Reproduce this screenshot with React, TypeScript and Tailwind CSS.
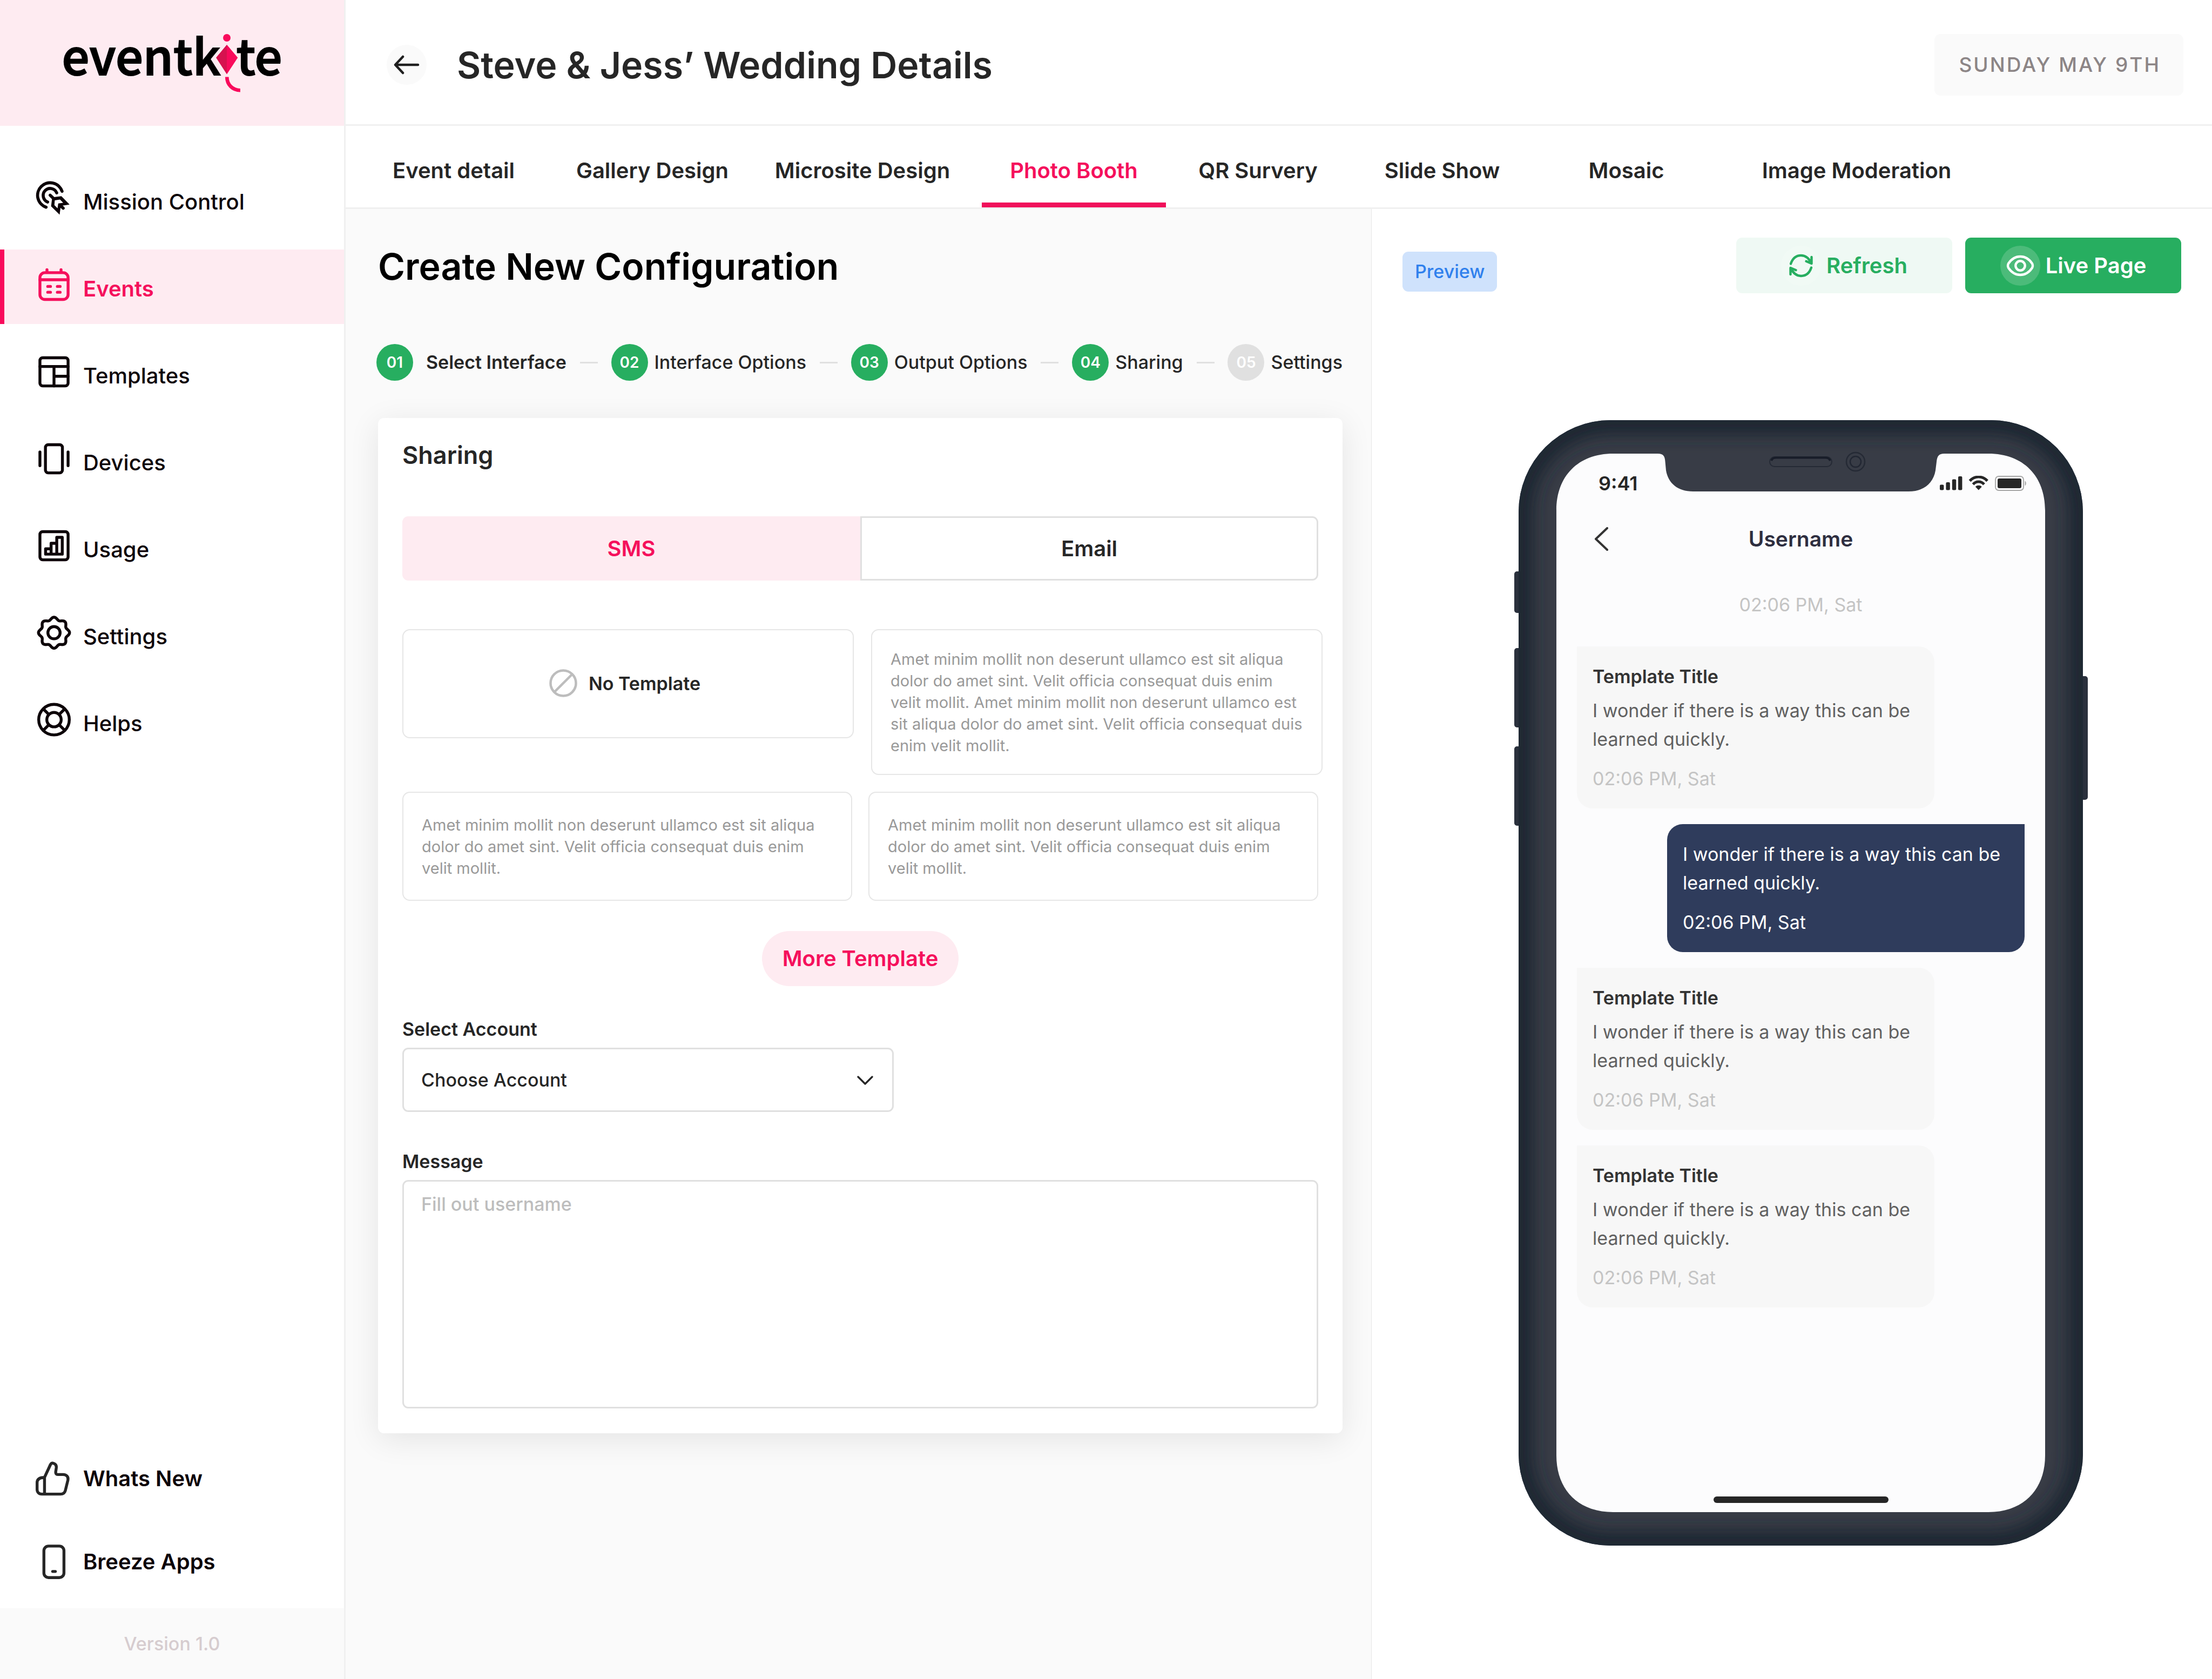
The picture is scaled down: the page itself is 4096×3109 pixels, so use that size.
import React from "react";

type IconProps = { className?: string };

const stroke = {
  fill: "none",
  stroke: "currentColor",
  strokeWidth: 1.9,
  strokeLinecap: "round" as const,
  strokeLinejoin: "round" as const,
};

function MissionIcon({ className }: IconProps) {
  return (
    <svg viewBox="96 78 288 288" className={className} aria-hidden="true">
      <g fill="none" stroke="currentColor" strokeWidth="24" strokeLinecap="round">
        <path d="M303 172A98.5 98.5 0 1 0 178 297" />
        <path d="M261 184A55 55 0 1 0 190 256" />
        <path d="M210 203L240 232M290 283L312 305" />
      </g>
      <path
        fill="currentColor"
        fillRule="evenodd"
        d="M240 218L298 210L362 276L293 287L284 355L217 290L224 236ZM246 243L287 237L312 262L273 267L268 306L243 280Z"
      />
    </svg>
  );
}

function EventsIcon({ className }: IconProps) {
  return (
    <svg viewBox="0 0 24 24" className={className} aria-hidden="true" {...stroke}>
      <rect x="2.8" y="4.2" width="18.4" height="17.5" rx="3.2" />
      <path d="M2.8 8.8H21.2M7.4 2.3V4M16.6 2.3V4M7.9 13.2H9.7M14.2 13.2H16M7.9 17H9.7M14.2 17H16" />
    </svg>
  );
}

function TemplatesIcon({ className }: IconProps) {
  return (
    <svg viewBox="0 0 24 24" className={className} aria-hidden="true" {...stroke}>
      <rect x="2.8" y="3" width="18.4" height="18.4" rx="1.8" />
      <path d="M2.8 8.7H21.2M12 8.7V21.4M12 15.1H21.2" />
    </svg>
  );
}

function DevicesIcon({ className }: IconProps) {
  return (
    <svg viewBox="0 0 24 24" className={className} aria-hidden="true" {...stroke}>
      <rect x="6.4" y="3" width="11.1" height="18.4" rx="1.8" />
      <path d="M2.8 7.7V16.7M21.2 7.7V16.7" />
    </svg>
  );
}

function UsageIcon({ className }: IconProps) {
  return (
    <svg viewBox="0 0 24 24" className={className} aria-hidden="true" {...stroke}>
      <rect x="2.8" y="3" width="18.4" height="18.4" rx="1.8" />
      <path d="M6.5 17.7V14.2H10.1V10.6H13.8V6.7H17.4V17.7ZM10.1 14.2V17.7M13.8 10.6V17.7" />
    </svg>
  );
}

const gearOutline =
  Array.from({ length: 121 }, (_, i) => {
    const angle = (i / 120) * Math.PI * 2;
    const radius = 9.3 + 0.85 * Math.cos(8 * angle);
    const x = (12 + radius * Math.cos(angle)).toFixed(2);
    const y = (12.2 + radius * Math.sin(angle)).toFixed(2);
    return `${i === 0 ? "M" : "L"}${x} ${y}`;
  }).join("") + "Z";

function SettingsIcon({ className }: IconProps) {
  return (
    <svg viewBox="0 0 24 24" className={className} aria-hidden="true" {...stroke}>
      <path d={gearOutline} />
      <circle cx="12" cy="12.2" r="4" />
    </svg>
  );
}

function HelpsIcon({ className }: IconProps) {
  return (
    <svg viewBox="0 0 24 24" className={className} aria-hidden="true" {...stroke}>
      <circle cx="12" cy="12.2" r="10" />
      <circle cx="12" cy="12.2" r="4.7" />
      <path d="M5 5.2L8.6 8.8M19 5.2L15.4 8.8M5 19.2L8.6 15.6M19 19.2L15.4 15.6" />
    </svg>
  );
}

function ThumbIcon({ className }: IconProps) {
  return (
    <svg viewBox="0 0 24 24" className={className} aria-hidden="true" {...stroke}>
      <path d="M5.8 22.1V11.2L9.6 3C9.9 2.2 10.4 1.8 11.1 1.8C12.8 2.1 13.7 3.2 13.5 4.9L13.1 7.7C13 8.6 13.5 9.3 14.4 9.3H18C20.2 9.3 21.5 10.9 21.1 12.9L19.4 19.8C19 21.3 18 22.1 16.3 22.1H4C2.1 22.1 0.95 20.8 0.95 19.1V14.7C0.95 12.4 2.4 11.2 5.8 11.2" />
    </svg>
  );
}

function PhoneIcon({ className }: IconProps) {
  return (
    <svg viewBox="0 0 24 24" className={className} aria-hidden="true" {...stroke}>
      <rect x="5.4" y="1.7" width="13.1" height="20.6" rx="3" />
      <path d="M11.1 18.3H12.9" />
    </svg>
  );
}

function Kite({ className }: IconProps) {
  return (
    <svg viewBox="0 0 63 152" className={className} aria-hidden="true">
      <circle cx="28" cy="9.8" r="9.8" fill="#f90a5c" />
      <path d="M28 27.7L0 61.5L28 105Z" fill="#d6124f" />
      <path d="M28 27.7L56.5 61.5L28 105Z" fill="#f90a5c" />
      <path d="M28.3 112C28.3 132 43 146.7 63 146.7" fill="none" stroke="#f90a5c" strokeWidth="9.4" />
    </svg>
  );
}

const navItems = [
  { label: "Mission Control", Icon: MissionIcon },
  { label: "Events", Icon: EventsIcon, active: true },
  { label: "Templates", Icon: TemplatesIcon },
  { label: "Devices", Icon: DevicesIcon },
  { label: "Usage", Icon: UsageIcon },
  { label: "Settings", Icon: SettingsIcon },
  { label: "Helps", Icon: HelpsIcon },
];

const footerItems = [
  { label: "Whats New", Icon: ThumbIcon },
  { label: "Breeze Apps", Icon: PhoneIcon },
];

function Sidebar() {
  return (
    <aside className="flex w-[640px] shrink-0 flex-col border-r-3 border-[#f0f0f0] bg-white">
      <a
        href="#home"
        aria-label="eventkite"
        className="flex h-[233px] items-start justify-center bg-[#feebf1] pt-9 font-['Noto_Sans_CJK_JP','Noto_Sans',sans-serif] text-[90px] leading-[128px] font-medium text-black [-webkit-text-stroke:2px_black]"
      >
        <span>eventk</span>
        <Kite className="-mr-2 -ml-2 mt-[27px] h-[108px] w-[45px]" />
        <span>te</span>
      </a>
      <nav aria-label="Main" className="flex flex-col gap-[23px] pt-[68px]">
        {navItems.map(({ label, Icon, active }) => (
          <a
            key={label}
            href={`#${label}`}
            className={
              active
                ? "flex h-[138px] items-center gap-5 border-l-8 border-[#f90a5c] bg-[#feebf1] pt-[7px] pl-[58px] text-[40px] font-semibold text-[#f5105c]"
                : "flex h-[138px] items-center gap-5 border-l-8 border-transparent pt-[7px] pl-[58px] text-[40px] font-medium text-[#0d0308]"
            }
          >
            <Icon className="mb-4 size-[68px]" />
            {label}
          </a>
        ))}
      </nav>
      <nav aria-label="More" className="mt-auto mb-[52px] flex flex-col gap-[86px] pl-[66px]">
        {footerItems.map(({ label, Icon }) => (
          <a
            key={label}
            href={`#${label}`}
            className="flex items-center gap-5 text-[40px] font-semibold text-[#0d0308]"
          >
            <Icon className="size-[68px] text-[#262626]" />
            {label}
          </a>
        ))}
      </nav>
      <p className="bg-[#fafafa] text-center text-[34px] leading-[131px] font-medium text-[#d6cccf]">
        Version 1.0
      </p>
    </aside>
  );
}

function Header() {
  return (
    <header className="flex h-[233px] items-center border-b-3 border-[#f0f0f0] bg-white pt-[9px] pr-[53px] pl-[76px]">
      <button
        type="button"
        aria-label="Back"
        className="flex size-[74px] items-center justify-center rounded-full bg-[#fafafa]"
      >
        <svg
          viewBox="0 0 48 36"
          className="h-9 w-12"
          fill="none"
          stroke="#1f1f1f"
          strokeWidth="4.5"
          strokeLinecap="round"
          strokeLinejoin="round"
        >
          <path d="M45 18H3M17 3L3 18L17 33" />
        </svg>
      </button>
      <h1 className="ml-14 text-[68px] leading-20 font-semibold text-[#262626]">
        Steve &amp; Jess’ Wedding Details
      </h1>
      <time className="ml-auto rounded-[11px] bg-[#fafafa] pr-[42px] pl-[45px] text-[37px] leading-[114px] font-medium tracking-[3px] text-[#8c8586]">
        SUNDAY MAY 9TH
      </time>
    </header>
  );
}

const tabs = [
  { label: "Event detail", width: "w-[400px]" },
  { label: "Gallery Design", width: "w-[336px]" },
  { label: "Microsite Design", width: "w-[442px]" },
  { label: "Photo Booth", width: "w-[341px]", active: true },
  { label: "QR Survery", width: "w-[341px]" },
  { label: "Slide Show", width: "w-[341px]" },
  { label: "Mosaic", width: "w-[341px]" },
  { label: "Image Moderation", width: "w-[512px]" },
];

function Tabs() {
  return (
    <nav aria-label="Event sections" className="flex h-[154px] border-b-3 border-[#f0f0f0] bg-white">
      {tabs.map(({ label, width, active }) => (
        <a
          key={label}
          href={`#${label}`}
          className={`${width} flex items-center justify-center border-b-9 pt-6 text-[40px] font-semibold ${
            active ? "border-[#f00f5a] text-[#f5105c]" : "border-transparent text-[#262626]"
          }`}
        >
          {label}
        </a>
      ))}
    </nav>
  );
}

const steps = ["Select Interface", "Interface Options", "Output Options", "Sharing", "Settings"];

function Stepper() {
  return (
    <ol className="mt-[104px] -ml-[3px] flex items-center justify-between text-[34px] leading-[68px] font-medium text-[#262626]">
      {steps.map((label, i) => (
        <React.Fragment key={label}>
          {i > 0 && <li aria-hidden="true" className="h-[3px] w-[33px] bg-[#e0e0e0]" />}
          <li className={i === 0 ? "flex items-center gap-6 font-semibold" : "flex items-center gap-3"}>
            <span
              className={
                i < 4
                  ? "flex size-[68px] items-center justify-center rounded-full bg-[#27ae60] text-[28px] font-semibold text-white"
                  : "flex size-[68px] items-center justify-center rounded-full bg-[#e0e0e0] text-[28px] font-semibold text-white"
              }
            >
              0{i + 1}
            </span>
            {label}
          </li>
        </React.Fragment>
      ))}
    </ol>
  );
}

const shortCopy =
  "Amet minim mollit non deserunt ullamco est sit aliqua dolor do amet sint. Velit officia consequat duis enim velit mollit.";
const longCopy = `${shortCopy} ${shortCopy}`;

function TemplateCard({ text }: { text: string }) {
  return (
    <button
      type="button"
      className="flex min-h-[202px] items-center rounded-[14px] border-2 border-[#e6e6e6] bg-white pt-[34px] pr-[30px] pb-8 pl-[34px] text-left text-[29px] leading-10 text-[#999999]"
    >
      {text}
    </button>
  );
}

function SharingCard() {
  return (
    <section className="mt-[69px] rounded-[11px] bg-white px-[45px] pt-[41px] pb-[46px] shadow-[0_11px_57px_rgba(0,0,0,0.09)]">
      <h3 className="text-[45px] leading-14 font-semibold text-[#262626]">Sharing</h3>
      <div role="tablist" className="mt-[85px] grid h-[119px] grid-cols-2 text-[40px] font-semibold">
        <button
          type="button"
          role="tab"
          aria-selected="true"
          className="rounded-l-[11px] bg-[#feebf1] text-[#f5105c]"
        >
          SMS
        </button>
        <button
          type="button"
          role="tab"
          aria-selected="false"
          className="rounded-r-[11px] border-3 border-[#e0e0e0] bg-white text-[#262626]"
        >
          Email
        </button>
      </div>

      <div className="mt-[90px] -mr-2 grid grid-cols-2 items-start gap-8">
        <button
          type="button"
          className="flex h-[202px] items-center justify-center gap-[21px] rounded-[14px] border-2 border-[#e6e6e6] bg-white pr-3 pb-[2px] text-[34px] font-semibold text-[#262626]"
        >
          <svg viewBox="0 0 52 52" className="size-[52px]" fill="none" stroke="#bdbdbd" strokeWidth="4.5">
            <circle cx="26" cy="26" r="23.5" />
            <path d="M42 10L10 42" />
          </svg>
          No Template
        </button>
        <TemplateCard text={longCopy} />
      </div>
      <div className="mt-[31px] grid grid-cols-2 gap-[30px]">
        <TemplateCard text={shortCopy} />
        <TemplateCard text={shortCopy} />
      </div>

      <button
        type="button"
        className="mx-auto mt-14 block rounded-full bg-[#feebf1] px-[38px] text-[40px] leading-[102px] font-semibold text-[#f5105c]"
      >
        More Template
      </button>

      <label htmlFor="account" className="mt-[58px] block text-[34px] leading-11 font-semibold text-[#262626]">
        Select Account
      </label>
      <div className="relative mt-3 w-[910px]">
        <select
          id="account"
          className="h-[119px] w-full appearance-none rounded-[11px] border-3 border-[#e0e0e0] bg-white px-8 text-[34px] font-medium text-[#262626]"
        >
          <option>Choose Account</option>
        </select>
        <svg
          viewBox="0 0 30 17"
          className="pointer-events-none absolute top-[52px] right-[38px] h-[17px] w-[30px]"
          fill="none"
          stroke="#262626"
          strokeWidth="3.4"
          strokeLinecap="round"
          strokeLinejoin="round"
        >
          <path d="M2 2L15 15L28 2" />
        </svg>
      </div>

      <label htmlFor="message" className="mt-[70px] block text-[34px] leading-11 font-semibold text-[#262626]">
        Message
      </label>
      <textarea
        id="message"
        placeholder="Fill out username"
        className="mt-3 block h-[423px] w-full resize-none rounded-[11px] border-3 border-[#e0e0e0] bg-white px-8 py-5 text-[34px] leading-11 font-medium text-[#262626] placeholder:text-[#bdbdbd]"
      />
    </section>
  );
}

function PhoneFrame({ className }: IconProps) {
  return (
    <svg viewBox="0 0 1063 2086" className={className} aria-hidden="true">
      <defs>
        <clipPath id="body">
          <rect x="8" y="1" width="1045" height="2084" rx="170" />
        </clipPath>
        <filter id="soft" x="-10%" y="-10%" width="120%" height="120%">
          <feGaussianBlur stdDeviation="15" />
        </filter>
      </defs>
      <g fill="#2a303c">
        <rect x="0" y="281" width="16" height="77" rx="5" />
        <rect x="0" y="423" width="16" height="147" rx="5" />
        <rect x="0" y="605" width="16" height="147" rx="5" />
        <rect x="1045" y="475" width="17" height="229" rx="5" />
      </g>
      <g clipPath="url(#body)">
        <rect x="8" y="1" width="1045" height="2084" fill="#383c46" />
        <rect
          x="8"
          y="1"
          width="1045"
          height="2084"
          rx="170"
          fill="none"
          stroke="#1e2530"
          strokeWidth="54"
          filter="url(#soft)"
        />
      </g>
      <path
        fill="#fcfcfd"
        d="M78 168C78 105 118 63 183 63H266C276 63 279 68 279.500 78L281 94C285 118 303 133 331 133H730C758 133 776 118 780 94L782 78C783 68 786 63 796 63H878C943 63 983 105 983 168V1918C983 1981 943 2023 878 2023H183C118 2023 78 1981 78 1918Z"
      />
      <rect x="473" y="69" width="115" height="18" rx="9" fill="none" stroke="#252a35" strokeWidth="2" />
      <path d="M476 76C478 71 481 70.500 485 70.500H576C580 70.500 583 71 585 76" fill="none" stroke="#181d29" strokeWidth="4" />
      <circle cx="632" cy="78" r="17" fill="none" stroke="#252a35" strokeWidth="2.500" />
      <circle cx="632" cy="78" r="10" fill="none" stroke="#222733" strokeWidth="2.500" />
    </svg>
  );
}

function StatusIcons() {
  return (
    <svg viewBox="0 0 162 28" className="h-7 w-[162px]" fill="#262626" aria-hidden="true">
      <rect x="0" y="16.500" width="7.400" height="10" rx="2" />
      <rect x="11.400" y="12" width="7.400" height="14.500" rx="2" />
      <rect x="22.800" y="6.500" width="7.400" height="20" rx="2" />
      <rect x="34" y="1" width="7.400" height="25.500" rx="2" />
      <g fill="none" stroke="#262626" strokeWidth="5">
        <path d="M55.500 9.500A21.500 21.500 0 0 1 88 9.500" />
        <path d="M61.500 15.800A13.500 13.500 0 0 1 82 15.800" />
      </g>
      <path d="M71.800 26.500L65.800 20.300A8.600 8.600 0 0 1 77.800 20.300Z" />
      <rect x="103" y="1" width="52" height="26" rx="6" fill="none" stroke="#a6a6a6" strokeWidth="1.800" />
      <rect x="107" y="5" width="44" height="18" rx="3" />
      <path d="M157.500 9.500C160.500 10.500 160.500 17.500 157.500 18.500Z" fill="#a6a6a6" />
    </svg>
  );
}

type Message = { title?: string; sent?: boolean };

const messages: Message[] = [
  { title: "Template Title" },
  { sent: true },
  { title: "Template Title" },
  { title: "Template Title" },
];

function Bubble({ title, sent }: Message) {
  return (
    <li
      className={
        sent
          ? "ml-auto w-[662px] rounded-[29px] rounded-tr-none bg-[#2f3c5c] p-[29px] text-white"
          : "w-[662px] rounded-[29px] rounded-tl-none bg-[#f7f7f7] p-[29px] text-[#616161]"
      }
    >
      {title && <h4 className="mb-[10px] font-semibold text-[#333333]">{title}</h4>}
      <p>I wonder if there is a way this can be learned quickly.</p>
      <time className={sent ? "mt-5 block text-white" : "mt-5 block text-[#c4c4c4]"}>02:06 PM, Sat</time>
    </li>
  );
}

function PhonePreview() {
  return (
    <div className="relative h-[2086px] w-[1063px]">
      <PhoneFrame className="absolute inset-0 size-full" />
      <div className="relative flex h-full flex-col pt-[63px] pr-20 pb-[63px] pl-[78px]">
        <div className="flex items-center justify-between pt-[33px] pr-[33px] pl-[78px] text-[#262626]">
          <span className="text-[36px] leading-11 font-semibold">9:41</span>
          <StatusIcons />
        </div>
        <div className="mt-[51px] grid grid-cols-3 items-center px-[70px]">
          <button type="button" aria-label="Back to messages" className="justify-self-start">
            <svg
              viewBox="0 0 26 44"
              className="h-11 w-[26px]"
              fill="none"
              stroke="#333333"
              strokeWidth="4"
              strokeLinecap="round"
              strokeLinejoin="round"
            >
              <path d="M24 2L3 22L24 42" />
            </svg>
          </button>
          <h3 className="justify-self-center text-[39px] leading-[60px] font-semibold text-[#2e2e3f]">
            Username
          </h3>
        </div>
        <time className="mt-[65px] text-center text-[34px] leading-[53px] text-[#c4c4c4]">02:06 PM, Sat</time>
        <ul className="mt-[51px] flex flex-col gap-[29px] px-[38px] text-[34px] leading-[53px]">
          {messages.map((message, i) => (
            <Bubble key={i} {...message} />
          ))}
        </ul>
        <div className="mx-auto mt-auto mb-[17px] h-3 w-[324px] rounded-full bg-[#262626]" />
      </div>
    </div>
  );
}

function PreviewPanel() {
  return (
    <section className="border-l border-[#e6e6e6] bg-white px-[57px] pt-[53px]">
      <div className="flex items-center justify-between">
        <span className="mt-[22px] rounded-[11px] bg-[#cfe2fc] px-[23px] text-[34px] leading-[74px] font-medium text-[#2f80ed]">
          Preview
        </span>
        <div className="flex gap-6 text-[40px] font-semibold">
          <button
            type="button"
            className="flex h-[103px] w-[400px] items-center justify-center gap-[10px] rounded-[11px] bg-[#eff9f4] text-[#27ae60]"
          >
            <span className="flex size-[74px] items-center justify-center rounded-full bg-[#f1faf5]">
              <svg
                viewBox="0 0 44 44"
                className="size-11"
                fill="none"
                stroke="currentColor"
                strokeWidth="4.400"
                strokeLinecap="round"
                strokeLinejoin="round"
              >
                <path d="M3 18.500C6.500 8 13 3 22 3C31 3 37 9 41 17.500M41.500 6V18L31.500 13.800" />
                <path d="M41 25.500C37.500 36 31 41 22 41C13 41 7 35 3 26.500M2.500 38V26L12.500 30.200" />
              </svg>
            </span>
            Refresh
          </button>
          <button
            type="button"
            className="flex h-[103px] w-[400px] items-center justify-center gap-[10px] rounded-[11px] bg-[#27ae60] text-white"
          >
            <span className="flex size-[74px] items-center justify-center rounded-full bg-[#4cbb7a]">
              <svg
                viewBox="0 0 52 40"
                className="h-10 w-[52px]"
                fill="none"
                stroke="currentColor"
                strokeWidth="4.400"
                strokeLinejoin="round"
              >
                <path d="M4 24Q2 20 4 16C10 7 17 3 26 3C35 3 42 7 48 16Q50 20 48 24C42 33 35 37 26 37C17 37 10 33 4 24Z" />
                <circle cx="26" cy="20" r="8.700" />
              </svg>
            </span>
            Live Page
          </button>
        </div>
      </div>
      <div className="mt-[234px] flex justify-center pl-[35px]">
        <PhonePreview />
      </div>
    </section>
  );
}

export default function App() {
  return (
    <div className="flex min-h-screen bg-white font-['Inter',sans-serif] [font-optical-sizing:none]">
      <Sidebar />
      <div className="flex min-w-0 flex-1 flex-col">
        <Header />
        <Tabs />
        <main className="grid flex-1 grid-cols-[1899fr_1557fr]">
          <section className="bg-[#fafafa] pt-[66px] pr-[53px] pl-[60px]">
            <h2 className="text-[68px] leading-20 font-semibold text-black">Create New Configuration</h2>
            <Stepper />
            <SharingCard />
          </section>
          <PreviewPanel />
        </main>
      </div>
    </div>
  );
}
